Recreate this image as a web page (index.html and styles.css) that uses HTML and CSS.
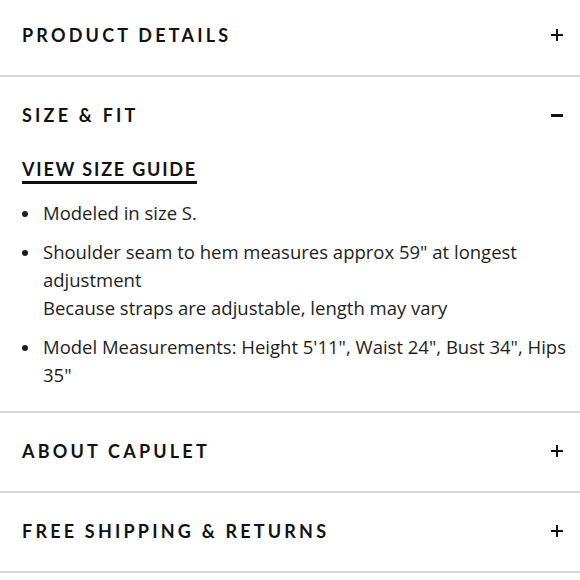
FILE: index.html
```html
<!DOCTYPE html>
<html>
<head>
<meta charset="utf-8">
<link rel="stylesheet" href="styles.css">
</head>
<body>
<div class="accordion">
  <section class="item">
    <div class="head"><span class="title">PRODUCT DETAILS</span><span class="icon plus"></span></div>
  </section>
  <section class="item open">
    <div class="head"><span class="title">SIZE &amp; FIT</span><span class="icon minus"></span></div>
    <div class="body">
      <a class="guide">VIEW SIZE GUIDE</a>
      <ul class="list">
        <li><span>Modeled in size S.</span></li>
        <li><span>Shoulder seam to hem measures approx 59" at longest adjustment<br>Because straps are adjustable, length may vary</span></li>
        <li><span>Model Measurements: Height 5'11", Waist 24", Bust 34", Hips 35"</span></li>
      </ul>
    </div>
  </section>
  <section class="item">
    <div class="head"><span class="title">ABOUT CAPULET</span><span class="icon plus"></span></div>
  </section>
  <section class="item">
    <div class="head"><span class="title">FREE SHIPPING &amp; RETURNS</span><span class="icon plus"></span></div>
  </section>
</div>
</body>
</html>
```
FILE: styles.css
```css
html, body { margin: 0; padding: 0; background: #fff; }
body { overflow: hidden; }
.accordion { margin-top: -3px; }
.item { border-bottom: 2px solid #d9d9d9; }
.head {
  height: 78px;
  box-sizing: border-box;
  display: flex;
  align-items: center;
  justify-content: space-between;
  padding: 0 17px 2px 22px;
}
.title {
  font-family: "Lato", "Liberation Sans", sans-serif;
  font-weight: 700;
  font-size: 18px;
  letter-spacing: 3.2px;
  color: #111;
}
.icon { position: relative; width: 12px; height: 12px; }
.icon::before, .icon::after {
  content: ""; position: absolute; background: #111;
}
.icon::before { left: 0; right: 0; top: 5px; height: 2px; }
.plus::after { top: 0; bottom: 0; left: 5px; width: 2px; }
.minus::before { height: 2.5px; }
.body { padding: 0 8px 22px 22px; }
.guide {
  display: inline-block;
  font-family: "Lato", "Liberation Sans", sans-serif;
  font-weight: 700;
  font-size: 18px;
  letter-spacing: 1.8px;
  color: #111;
  border-bottom: 3px solid #111;
  padding-bottom: 1px;
  line-height: 22px;
  margin-top: 3px;
}
.list {
  list-style: none;
  margin: 15px 0 0;
  padding: 0;
  font-family: "Open Sans", sans-serif;
  font-size: 18.5px;
  line-height: 28px;
  color: #1e1e1e;
}
.list li {
  display: grid;
  grid-template-columns: 21px 1fr;
  margin-bottom: 11px;
}
.list li::before {
  content: "";
  width: 6px;
  height: 6px;
  border-radius: 50%;
  background: #1e1e1e;
  margin-top: 12px;
  margin-left: 0;
}
.list li:last-child { margin-bottom: 0; }
```
